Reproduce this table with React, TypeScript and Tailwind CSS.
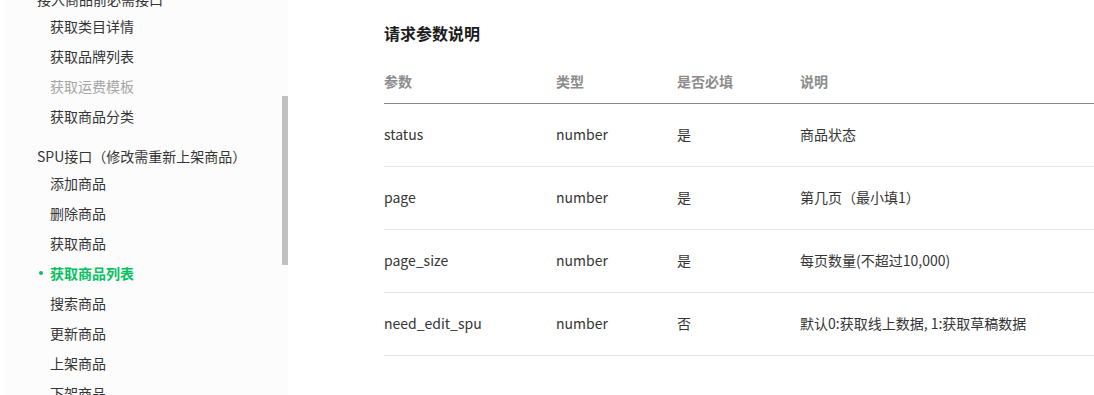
import React from "react";

type Item = { label: string; active?: boolean; disabled?: boolean };

const group1: Item[] = [
  { label: "获取类目详情" },
  { label: "获取品牌列表" },
  { label: "获取运费模板", disabled: true },
  { label: "获取商品分类" },
];

const group2: Item[] = [
  { label: "添加商品" },
  { label: "删除商品" },
  { label: "获取商品" },
  { label: "获取商品列表", active: true },
  { label: "搜索商品" },
  { label: "更新商品" },
  { label: "上架商品" },
  { label: "下架商品" },
];

const rows = [
  { p: "status", t: "number", r: "是", d: "商品状态" },
  { p: "page", t: "number", r: "是", d: "第几页（最小填1）" },
  { p: "page_size", t: "number", r: "是", d: "每页数量(不超过10,000)" },
  { p: "need_edit_spu", t: "number", r: "否", d: "默认0:获取线上数据, 1:获取草稿数据" },
];

function NavItem({ item }: { item: Item }) {
  return (
    <div
      className={
        "relative h-[30px] leading-[30px] pl-[45px] text-[14px] whitespace-nowrap " +
        (item.active
          ? "text-[#07c160] font-bold"
          : item.disabled
          ? "text-[#a5a5a5]"
          : "text-[#353535]")
      }
    >
      {item.active && (
        <span className="absolute left-[34px] top-[13px] w-[4px] h-[4px] rounded-full bg-[#07c160]" />
      )}
      {item.label}
    </div>
  );
}

export default function App() {
  return (
    <div
      className="flex w-[1094px] h-[395px] overflow-hidden bg-white"
      style={{ fontFamily: '"Noto Sans CJK SC", "Noto Sans", sans-serif' }}
    >
      <div className="w-[5px] shrink-0" />
      <div className="w-[277px] shrink-0 bg-[#fcfcfc] overflow-hidden">
        <div className="mt-[-13px]">
          <div className="h-[24px] leading-[24px] pl-[32px] text-[14px] text-[#353535] whitespace-nowrap">
            接入商品前必需接口
          </div>
          {group1.map((it) => (
            <NavItem key={it.label} item={it} />
          ))}
          <div className="mt-[13px] h-[24px] leading-[24px] pl-[32px] text-[14px] text-[#353535] whitespace-nowrap">
            SPU接口（修改需重新上架商品）
          </div>
          {group2.map((it) => (
            <NavItem key={it.label} item={it} />
          ))}
        </div>
      </div>
      <div className="w-[6px] shrink-0 bg-[#fcfcfc]">
        <div className="mt-[96px] h-[169px] bg-[#c1c1c1]" />
      </div>
      <div className="flex-1 pl-[96px] min-w-0">
        <h2 className="mt-[22px] h-[22px] leading-[22px] text-[16px] font-bold text-[#1b1b1b]">
          请求参数说明
        </h2>
        <div className="mt-[27px]">
          <div className="grid grid-cols-[172px_121px_123px_1fr] h-[33px] leading-[20px] text-[14px] font-bold text-[#8c8c8c] border-b border-[#8a8a8a]">
            <div>参数</div>
            <div>类型</div>
            <div>是否必填</div>
            <div>说明</div>
          </div>
          {rows.map((r) => (
            <div
              key={r.p}
              className="grid grid-cols-[172px_121px_123px_1fr] h-[63px] pb-[2px] items-center text-[14px] text-[#353535] border-b border-[#e5e5e5]"
            >
              <div>{r.p}</div>
              <div>{r.t}</div>
              <div>{r.r}</div>
              <div className="whitespace-nowrap">{r.d}</div>
            </div>
          ))}
        </div>
      </div>
    </div>
  );
}
